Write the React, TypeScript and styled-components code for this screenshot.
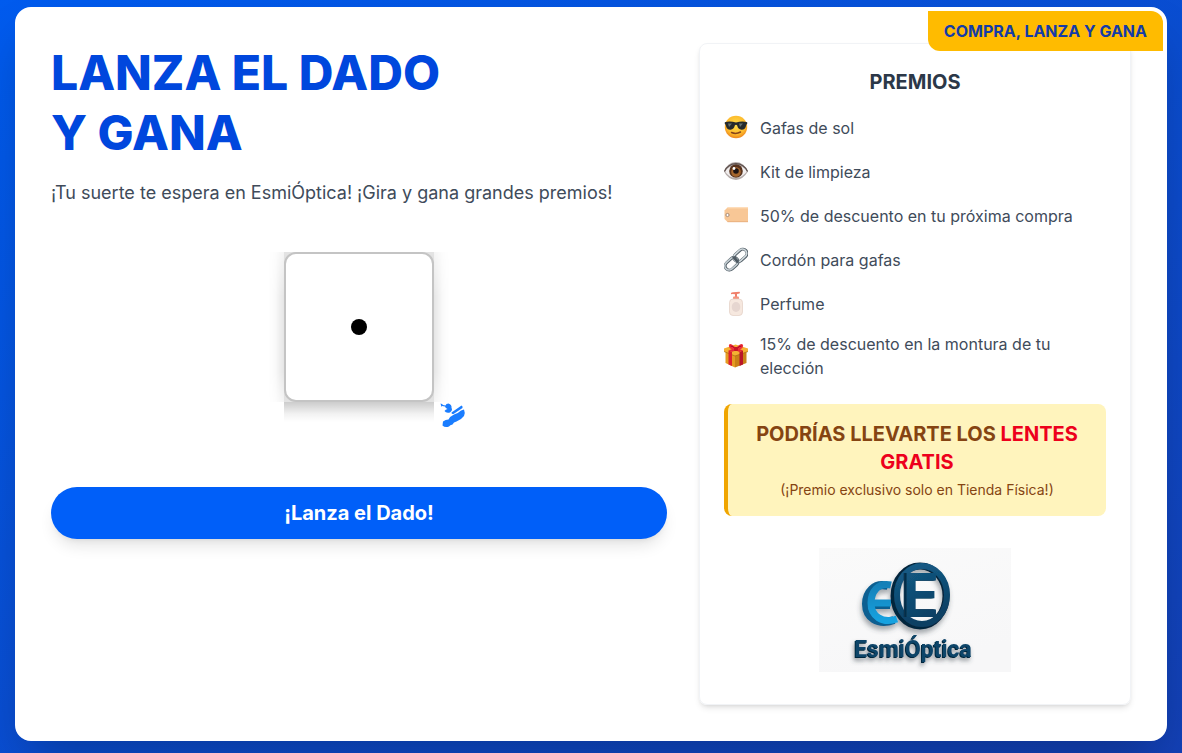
import React from "react";
import styled, { createGlobalStyle } from "styled-components";

const GlobalStyle = createGlobalStyle`
  *, *::before, *::after { box-sizing: border-box; }
  body {
    margin: 0;
    font-family: Inter, "Liberation Sans", sans-serif;
    color: #404b5a;
  }
  h1, h2, p, ul { margin: 0; padding: 0; }
`;

const Page = styled.div`
  min-height: 100vh;
  display: flex;
  justify-content: center;
  align-items: flex-start;
  padding: 7px 15px 12px;
  background: linear-gradient(to bottom right, #005bee, #1340b5);
`;

const Card = styled.main`
  position: relative;
  display: flex;
  width: 100%;
  max-width: 1152px;
  padding: 32px;
  border: 4px solid #fff;
  border-radius: 16px;
  background: #fff;
  box-shadow: 0 25px 50px -12px rgba(0, 0, 0, 0.25);
`;

const Badge = styled.div`
  position: absolute;
  top: 0;
  right: 0;
  padding: 8px 16px;
  border-radius: 0 12px 0 12px;
  background: #ffbb00;
  color: #143ba8;
  font-size: 16px;
  line-height: 24px;
  font-weight: 700;
`;

const GamePanel = styled.section`
  width: 60%;
  padding-right: 32px;
`;

const Title = styled.h1`
  color: #0047dd;
  font-size: 48px;
  line-height: 60px;
  font-weight: 800;
`;

const Lead = styled.p`
  margin-top: 16px;
  font-size: 18px;
  line-height: 28px;
`;

const DiceStage = styled.div`
  display: flex;
  justify-content: center;
  padding: 45px 0 85px;
`;

const Dice = styled.div`
  position: relative;
  isolation: isolate;
  width: 150px;
  height: 150px;
  background: #eeeeee;

  &::before {
    content: "";
    position: absolute;
    z-index: -1;
    inset: 0 -16px;
    background: linear-gradient(
      to right,
      transparent,
      rgba(0, 0, 0, 0.02) 7px,
      rgba(0, 0, 0, 0.1) 16px,
      rgba(0, 0, 0, 0.1) calc(100% - 16px),
      rgba(0, 0, 0, 0.02) calc(100% - 7px),
      transparent
    );
    mask-image: linear-gradient(to bottom, rgba(0, 0, 0, 0.4), #000 30%, #000 80%, rgba(0, 0, 0, 0.4));
  }

  &::after {
    content: "";
    position: absolute;
    top: 100%;
    left: 0;
    right: 0;
    height: 20px;
    background: linear-gradient(to bottom, rgba(0, 0, 0, 0.2), rgba(0, 0, 0, 0.05) 60%, transparent);
  }
`;

const DiceFace = styled.div`
  display: grid;
  place-items: center;
  width: 100%;
  height: 100%;
  border: 2px solid #c4c4c4;
  border-radius: 12px;
  background: #fff;
`;

const Pip = styled.span`
  width: 16px;
  height: 16px;
  border-radius: 50%;
  background: #000;
`;

const Sparkle = styled.svg`
  position: absolute;
  right: -32px;
  bottom: -26px;
`;

const RollButton = styled.button`
  display: block;
  width: 100%;
  padding: 12px 24px;
  border: 0;
  border-radius: 26px;
  background: #005ff9;
  color: #fff;
  font-family: inherit;
  font-size: 20px;
  line-height: 28px;
  font-weight: 700;
  cursor: pointer;
  box-shadow: 0 10px 15px -3px rgba(0, 0, 0, 0.1), 0 4px 6px -4px rgba(0, 0, 0, 0.1);
`;

const PrizePanel = styled.aside`
  width: 40%;
  padding: 24px;
  border: 1px solid #f1f3f6;
  border-radius: 8px;
  box-shadow: 0 4px 6px -1px rgba(0, 0, 0, 0.1), 0 2px 4px -2px rgba(0, 0, 0, 0.1);
`;

const PrizeTitle = styled.h2`
  margin-bottom: 16px;
  color: #2c3848;
  font-size: 20px;
  line-height: 28px;
  font-weight: 700;
  text-align: center;
`;

const PrizeList = styled.ul`
  display: flex;
  flex-direction: column;
  gap: 12px;
  list-style: none;
`;

const Prize = styled.li`
  display: flex;
  align-items: center;
  gap: 12px;
  min-height: 32px;
  font-size: 16px;
  line-height: 24px;
`;

const PrizeIcon = styled.svg`
  flex: none;
  width: 24px;
  height: 26px;
`;

const Callout = styled.div`
  margin-top: 24px;
  padding: 16px;
  border-left: 4px solid #f0a500;
  border-radius: 8px;
  background: #fff4bd;
  color: #854412;
  text-align: center;
`;

const CalloutTitle = styled.p`
  font-size: 20px;
  line-height: 28px;
  font-weight: 700;
`;

const Highlight = styled.strong`
  color: #ed001c;
  font-weight: inherit;
`;

const CalloutNote = styled.p`
  margin-top: 4px;
  font-size: 14px;
  line-height: 20px;
`;

const Logo = styled.svg`
  display: block;
  width: 192px;
  height: 124px;
  margin: 32px auto 8px;
`;

const SunglassesIcon = () => (
  <PrizeIcon viewBox="0 0 24 26" aria-hidden="true">
    <defs>
      <radialGradient id="face" cx="50%" cy="40%" r="62%">
        <stop offset="0" stopColor="#ffe04a" />
        <stop offset="0.7" stopColor="#fdb92c" />
        <stop offset="1" stopColor="#ea7f1c" />
      </radialGradient>
    </defs>
    <circle cx="12" cy="12" r="11.200" fill="url(#face)" />
    <path d="M0.800 7.200Q6 5.600 12 7.600Q18 5.600 23.200 7.200V9Q22.300 9 22 11Q21.300 14.800 17.500 14.700Q14 14.500 13.200 10.500Q12 9 10.800 10.500Q10 14.500 6.500 14.700Q2.700 14.800 2 11Q1.700 9 0.800 9Z" fill="#252a2c" />
    <path d="M4 8.500L8 8.400L5 12Z M15 8.500L19 8.400L16 12Z" fill="#65706f" />
    <path d="M7.500 17.500Q12 19.500 16.500 17" fill="none" stroke="#87451b" strokeWidth="1.500" strokeLinecap="round" />
  </PrizeIcon>
);

const EyeIcon = () => (
  <PrizeIcon viewBox="0 0 24 26" aria-hidden="true">
    <path d="M0 12.500Q3 3.500 11.500 3Q20 3 24 12.500Q19 20.500 12 21Q4 20.500 0 12.500Z" fill="#b5acaa" />
    <path d="M1 12.500Q5 6.500 12 6Q19 6.500 23 12.500Q18 18.500 12 19Q5 18.500 1 12.500Z" fill="#f1eeee" />
    <circle cx="12" cy="12" r="6.800" fill="#57331e" />
    <circle cx="12" cy="13" r="4.800" fill="#a5662d" />
    <circle cx="12" cy="12" r="2.800" fill="#1c1212" />
    <circle cx="10" cy="9.500" r="1.400" fill="#fff" />
    <path d="M0.500 12.500Q4 5 12 4.700Q20 5 23.500 12.500" fill="none" stroke="#5d504d" strokeWidth="1.300" />
  </PrizeIcon>
);

const TagIcon = () => (
  <PrizeIcon viewBox="0 0 24 26" aria-hidden="true">
    <path d="M3.500 4.500H24V19H3.500L0.500 16V7.500Z" fill="#f8c796" />
    <path d="M3.500 4.900H24" stroke="#ffdab2" />
    <path d="M3.500 18.700H24" stroke="#e9b080" />
    <circle cx="3.500" cy="12" r="1.600" fill="#fff" stroke="#a58a77" />
  </PrizeIcon>
);

const LinkIcon = () => (
  <PrizeIcon viewBox="0 0 24 26" fill="none" aria-hidden="true">
    <g transform="rotate(-42 7.500 17)">
      <rect x="0.500" y="12.800" width="14.500" height="8.400" rx="4.200" stroke="#4e5a63" strokeWidth="3" />
      <rect x="0.300" y="12.500" width="14.500" height="8.400" rx="4.200" stroke="#c3cdd2" strokeWidth="1.700" />
    </g>
    <g transform="rotate(-42 16.500 8.500)">
      <rect x="9.300" y="4.300" width="14.500" height="8.400" rx="4.200" stroke="#4e5a63" strokeWidth="3" />
      <rect x="9.100" y="4" width="14.500" height="8.400" rx="4.200" stroke="#d0d9dd" strokeWidth="1.700" />
    </g>
    <path d="M10 10.500L13.500 14.500" stroke="#4e5a63" strokeWidth="2.800" strokeLinecap="round" />
  </PrizeIcon>
);

const LotionIcon = () => (
  <PrizeIcon viewBox="0 0 24 26" aria-hidden="true">
    <path d="M7 3.300Q6.500 1.300 9 1.200L15.500 0.800Q16.500 1.500 15.500 2.500L13 3V7H11V3.200L8.500 3Z" fill="#f07f6a" />
    <rect x="9" y="5.500" width="6" height="3" rx="1" fill="#f3947f" />
    <rect x="5.500" y="8" width="13" height="16.500" rx="3.500" fill="#f6e8df" stroke="#e3cfc4" strokeWidth="0.700" />
    <ellipse cx="12" cy="16" rx="4.300" ry="5" fill="#e6d6d0" />
  </PrizeIcon>
);

const GiftIcon = () => (
  <PrizeIcon viewBox="0 0 24 26" aria-hidden="true">
    <path d="M1.500 8L11 12V24.500L1.500 20Z" fill="#e59c22" />
    <path d="M22.500 8L11 12V24.500L22.500 20Z" fill="#c98118" />
    <path d="M0 5.500L11.500 1.500L24 5.500V8.500L11 13L0 8.500Z" fill="#f4b233" />
    <path d="M0 8.500L11 13L24 8.500" fill="none" stroke="#a96812" strokeWidth="0.700" />
    <path d="M4.500 7.500L8 8.800V23L4.500 21.400Z" fill="#dc2230" />
    <path d="M15.500 9L19 7.500V21.500L15.500 23Z" fill="#b9162a" />
    <path d="M4.500 7.500L12 4.500L19 7.500L15.500 9L12 7.500L8 8.800Z" fill="#e52a36" />
    <path d="M12 5Q6 -1 5 2Q4 6.500 12 7Q20 6.500 19 2Q17.500 -1 12 5Z" fill="#ee2f3b" />
    <path d="M6.500 3Q9 3 11 5.500M17.500 3Q15 3 13 5.500" fill="none" stroke="#a30e20" strokeWidth="1" />
    <rect x="10" y="4" width="4" height="4" rx="1" fill="#c71426" />
  </PrizeIcon>
);

const EsmiOpticaLogo = () => (
  <Logo viewBox="0 0 192 124" role="img" aria-label="EsmiÓptica">
    <defs>
      <linearGradient id="backdrop" x1="0" y1="0" x2="0.4" y2="1">
        <stop offset="0" stopColor="#fafafa" />
        <stop offset="1" stopColor="#f7f7f8" />
      </linearGradient>
      <linearGradient id="navy" x1="0" y1="0" x2="0.3" y2="1">
        <stop offset="0" stopColor="#155d88" />
        <stop offset="1" stopColor="#0a3f63" />
      </linearGradient>
      <linearGradient id="sky" x1="0" y1="0" x2="0" y2="1">
        <stop offset="0" stopColor="#1480b8" />
        <stop offset="1" stopColor="#18a2e0" />
      </linearGradient>
      <filter id="cast" x="-20%" y="-20%" width="150%" height="160%">
        <feDropShadow dx="-1" dy="4" stdDeviation="2.500" floodColor="#3b4650" floodOpacity="0.450" />
      </filter>
      <filter id="bevel" x="-20%" y="-20%" width="150%" height="160%">
        <feDropShadow dx="-1" dy="0" stdDeviation="0" floodColor="#08304c" />
        <feDropShadow dx="-2" dy="0" stdDeviation="0" floodColor="#08304c" />
      </filter>
      <filter id="lettering" x="-10%" y="-20%" width="120%" height="170%">
        <feDropShadow dx="-1" dy="1" stdDeviation="0" floodColor="#06263e" />
        <feDropShadow dx="-1" dy="3" stdDeviation="2" floodColor="#3b4650" floodOpacity="0.500" />
      </filter>
    </defs>
    <rect width="192" height="124" fill="url(#backdrop)" />
    <g filter="url(#cast)" fill="none">
      <path d="M69 38C55 34 47 45 47 56C47 69 58 78 75 72M52 57H71" stroke="#0b5f91" strokeWidth="8" />
      <path d="M72 37C59 34 52 44 52 55C52 68 63 76 78 71M54 55H72" stroke="url(#sky)" strokeWidth="7" />
      <ellipse cx="101" cy="48" rx="26" ry="30" stroke="#06263e" strokeWidth="7" />
      <ellipse cx="103" cy="47" rx="25" ry="29" stroke="url(#navy)" strokeWidth="6" />
    </g>
    <text x="102" y="69" fill="url(#navy)" fontFamily="Inter, sans-serif" fontWeight="700" fontSize="60" textAnchor="middle" filter="url(#bevel)">E</text>
    <text x="94" y="109" fill="#0d4569" fontFamily="Roboto, sans-serif" fontWeight="700" fontSize="23" textAnchor="middle" filter="url(#lettering)">EsmiÓptica</text>
  </Logo>
);

const prizes = [
  { Icon: SunglassesIcon, label: "Gafas de sol" },
  { Icon: EyeIcon, label: "Kit de limpieza" },
  { Icon: TagIcon, label: "50% de descuento en tu próxima compra" },
  { Icon: LinkIcon, label: "Cordón para gafas" },
  { Icon: LotionIcon, label: "Perfume" },
  { Icon: GiftIcon, label: "15% de descuento en la montura de tu elección" },
];

export default function App() {
  return (
    <>
      <GlobalStyle />
      <Page>
        <Card>
          <GamePanel>
            <Title>
              LANZA EL DADO
              <br />Y GANA
            </Title>
            <Lead>¡Tu suerte te espera en EsmiÓptica! ¡Gira y gana grandes premios!</Lead>
            <DiceStage>
              <Dice>
                <DiceFace>
                  <Pip />
                </DiceFace>
                <Sparkle width="26" height="26" viewBox="0 0 26 26" fill="#1a7dff" aria-hidden="true">
                  <path d="M0.500 1.500L2 2L3 3L5.500 3.500Q6 1.500 8.500 1.500Q12 2.500 11.500 6Q13 8 10 10.500Q6 11.500 4.500 9Q5.500 7.500 7.500 7Q5.500 6 5 4.500L2 4L1.500 5Z" />
                  <path d="M11.500 10.500L21.500 3.500Q23 4 22.500 6L13.500 12Q11.500 12.500 11.500 10.500Z" />
                  <path d="M3 19.500Q5.500 17.500 8.500 17.500Q10.500 14 14 12.500Q18 11.500 21 8.500L24 7.500Q25.500 11 24 14Q21 18 16.500 19.500Q13.500 20 12.500 22.500Q10 23 9 24.500Q5 26 2.500 23.500Z" />
                </Sparkle>
              </Dice>
            </DiceStage>
            <RollButton type="button">¡Lanza el Dado!</RollButton>
          </GamePanel>
          <PrizePanel>
            <PrizeTitle>PREMIOS</PrizeTitle>
            <PrizeList>
              {prizes.map(({ Icon, label }) => (
                <Prize key={label}>
                  <Icon />
                  <span>{label}</span>
                </Prize>
              ))}
            </PrizeList>
            <Callout>
              <CalloutTitle>
                PODRÍAS LLEVARTE LOS <Highlight>LENTES GRATIS</Highlight>
              </CalloutTitle>
              <CalloutNote>(¡Premio exclusivo solo en Tienda Física!)</CalloutNote>
            </Callout>
            <EsmiOpticaLogo />
          </PrizePanel>
          <Badge>COMPRA, LANZA Y GANA</Badge>
        </Card>
      </Page>
    </>
  );
}
